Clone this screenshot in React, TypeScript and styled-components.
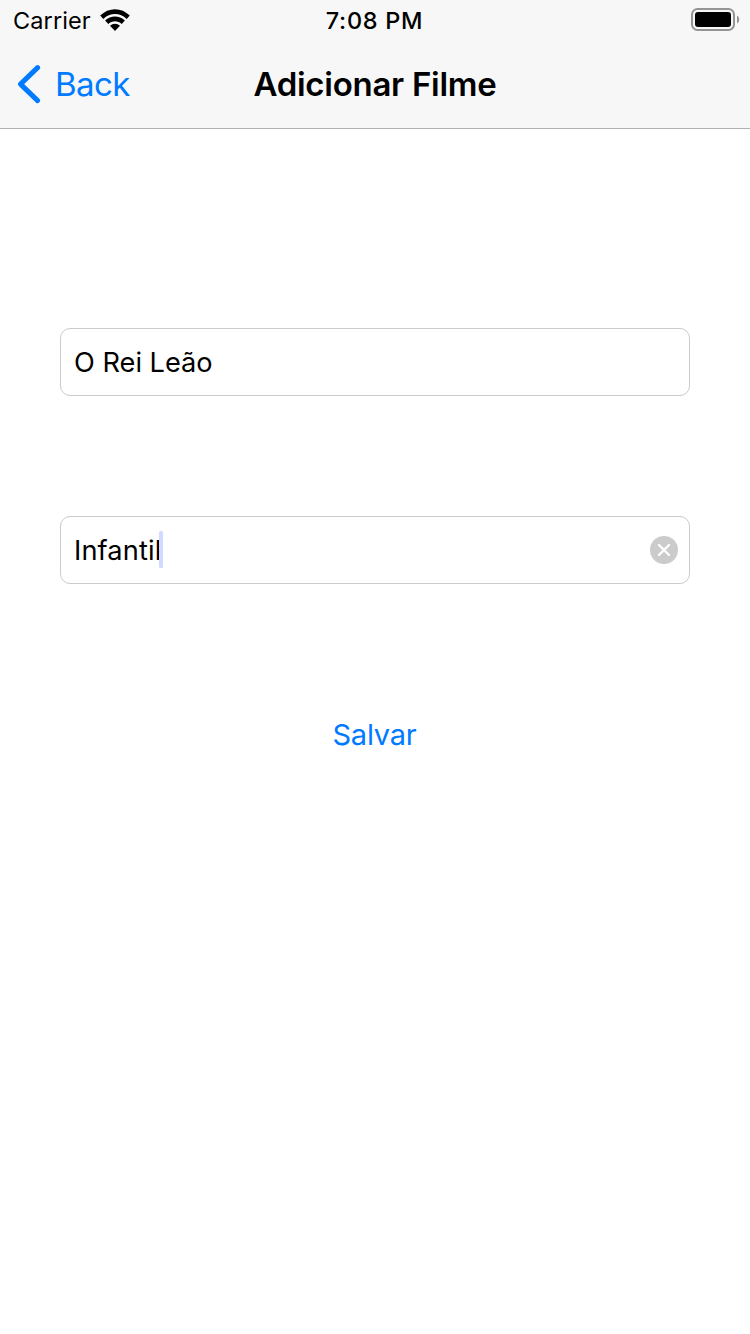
import React, { useState } from "react";
import styled, { createGlobalStyle } from "styled-components";

const GlobalStyle = createGlobalStyle`
  * { box-sizing: border-box; }
  body {
    margin: 0;
    background: #fff;
    font-family: Inter, "Liberation Sans", sans-serif;
    color: #000;
  }
`;

const Screen = styled.div`
  display: flex;
  flex-direction: column;
  width: 750px;
  height: 1334px;
  overflow: hidden;
  background: #fff;
`;

const Header = styled.header`
  height: 129px;
  background: #f7f7f7;
  border-bottom: 1px solid #b0b0b0;
`;

const Bar = styled.div<{ $height: number; $padding: string }>`
  display: grid;
  grid-template-columns: 1fr auto 1fr;
  align-items: center;
  height: ${(p) => p.$height}px;
  padding: ${(p) => p.$padding};
`;

const Label = styled.span<{ $size: number; $weight?: number; $spacing?: number; $top?: number }>`
  padding-top: ${(p) => p.$top ?? 0}px;
  font-size: ${(p) => p.$size}px;
  font-weight: ${(p) => p.$weight ?? 400};
  letter-spacing: ${(p) => p.$spacing ?? 0}px;
  line-height: 38px;
  white-space: pre;
`;

const Carrier = styled.div`
  display: flex;
  align-items: center;
  gap: 9px;
`;

const BatterySlot = styled.div`
  display: flex;
  justify-content: flex-end;
  margin-right: -4px;
`;

const BackButton = styled.button`
  display: flex;
  align-items: center;
  gap: 14px;
  padding: 0;
  border: 0;
  background: none;
  color: #007aff;
  font-family: inherit;
`;

const Form = styled.main`
  display: flex;
  flex-direction: column;
  align-items: stretch;
  padding: 199px 60px 0;
`;

const Field = styled.div`
  display: flex;
  align-items: center;
  height: 68px;
  margin-bottom: 120px;
  padding: 0 11px 0 13px;
  border: 1px solid #cbcbcb;
  border-radius: 10px;
`;

const Caret = styled.span`
  width: 4px;
  height: 37px;
  margin: 0 0 1px -2px;
  border-radius: 1.5px;
  background: #d0d9ff;
`;

const ClearButton = styled.button`
  display: flex;
  margin-left: auto;
  padding: 0;
  border: 0;
  background: none;
`;

const SaveButton = styled.button`
  align-self: center;
  margin: 12px 1px 0 0;
  padding: 0;
  border: 0;
  background: none;
  color: #007aff;
  font-family: inherit;
`;

const WifiIcon = () => (
  <svg width="30" height="22" viewBox="0 0 30 22">
    <path d="M0.2 6.6C8.3-2 21.7-2 29.8 6.6L26.7 9.9C20.2 3.4 9.8 3.4 3.3 9.9Z" />
    <path d="M5.1 11.6C10.6 6 19.4 6 24.9 11.6L21.7 14.9C18 11.4 12 11.4 8.3 14.9Z" />
    <path d="M10 16.7C12.9 14 17.1 14 20 16.7L15 21.9Z" />
  </svg>
);

const BatteryIcon = () => (
  <svg width="49" height="24" viewBox="0 0 49 24">
    <rect x="1" y="1" width="42" height="21" rx="5.5" fill="none" stroke="#949494" strokeWidth="2" />
    <rect x="4" y="4" width="36" height="15" rx="3" />
    <path d="M46 7.5C48.9 8.8 48.9 14.2 46 15.5Z" fill="#949494" />
  </svg>
);

const ChevronIcon = () => (
  <svg width="24" height="40" viewBox="0 0 24 40">
    <path d="M20.6 3.6 3.5 20.1 20.6 36.6" fill="none" stroke="currentColor" strokeWidth="5" strokeLinecap="round" strokeLinejoin="round" />
  </svg>
);

const ClearIcon = () => (
  <svg width="28" height="28" viewBox="0 0 28 28">
    <circle cx="14" cy="14" r="14" fill="#cbcbcb" />
    <path d="m9 9 10 10M19 9 9 19" stroke="#fff" strokeWidth="2.4" strokeLinecap="round" />
  </svg>
);

export default function App() {
  const [genre, setGenre] = useState("Infantil");
  return (
    <Screen>
      <GlobalStyle />
      <Header>
        <Bar $height={40} $padding="0 14px 0 13px">
          <Carrier>
            <Label $size={23.5} $spacing={0.1} $top={2}>Carrier</Label>
            <WifiIcon />
          </Carrier>
          <Label $size={23.5} $weight={500} $spacing={0.7} $top={2}>7:08 PM</Label>
          <BatterySlot><BatteryIcon /></BatterySlot>
        </Bar>
        <Bar $height={88} $padding="0 17px">
          <BackButton>
            <ChevronIcon />
            <Label $size={33} $spacing={-0.6}>Back</Label>
          </BackButton>
          <Label $size={33} $weight={600} $spacing={-0.27}>Adicionar Filme</Label>
        </Bar>
      </Header>
      <Form>
        <Field><Label $size={27.2} $top={2}>O Rei Leão</Label></Field>
        <Field>
          <Label $size={27.2} $spacing={0.12} $top={2}>{genre}</Label>
          <Caret />
          <ClearButton aria-label="Limpar" onClick={() => setGenre("")}><ClearIcon /></ClearButton>
        </Field>
        <SaveButton><Label $size={29} $spacing={-0.22}>Salvar</Label></SaveButton>
      </Form>
    </Screen>
  );
}
